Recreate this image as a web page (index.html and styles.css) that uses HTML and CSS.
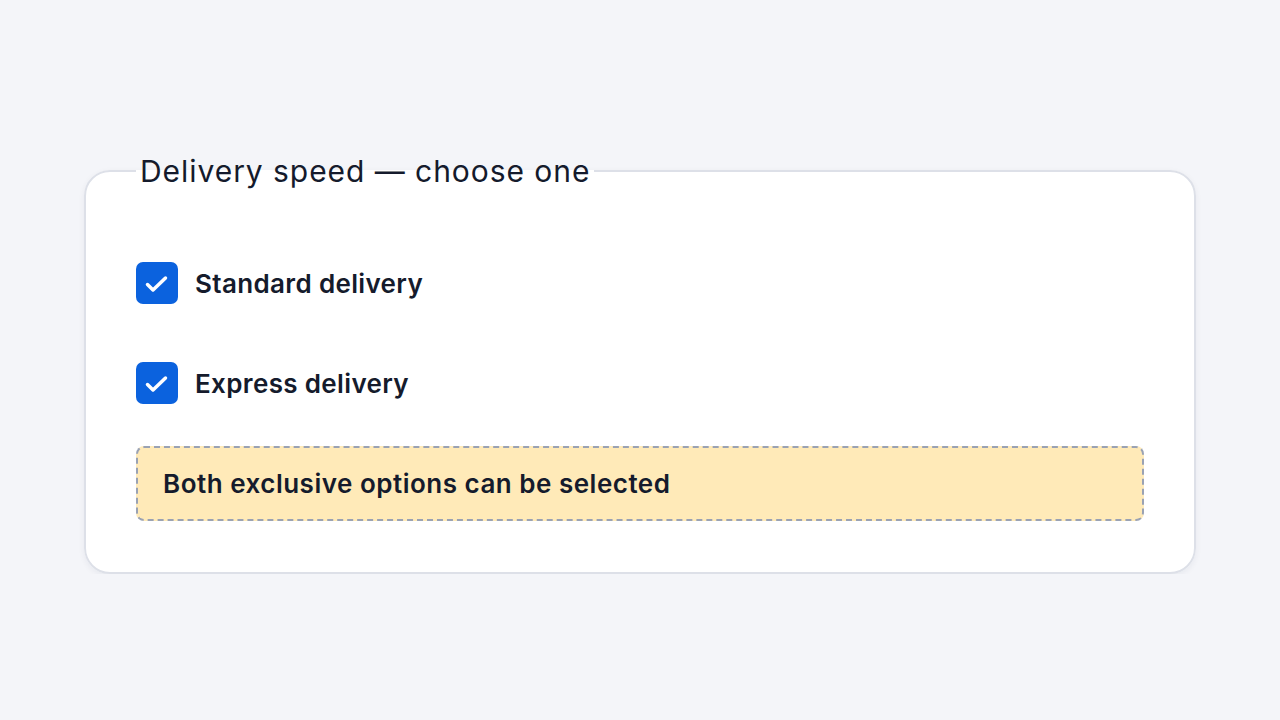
FILE: index.html
```html
<!DOCTYPE html>
<html lang="en">
<head>
  <meta charset="UTF-8">
  <title>Delivery speed</title>
  <link rel="stylesheet" href="styles.css">
</head>
<body>

  <main class="page">
    <fieldset class="group">
      <legend>Delivery speed — choose one</legend>

      <label class="option">
        <span class="box">
          <svg viewBox="0 0 42 42" width="42" height="42"><path d="M11.5 22.5 L17 28 L29.5 16" /></svg>
        </span>
        <span class="label-text">Standard delivery</span>
      </label>

      <label class="option">
        <span class="box">
          <svg viewBox="0 0 42 42" width="42" height="42"><path d="M11.5 22.5 L17 28 L29.5 16" /></svg>
        </span>
        <span class="label-text">Express delivery</span>
      </label>

      <div class="notice">Both exclusive options can be selected</div>
    </fieldset>
  </main>

</body>
</html>
```

FILE: styles.css
```css
body {
  margin: 0;
  background: #f4f5f9;
  font-family: Inter, "Noto Sans", sans-serif;
  color: #151b2c;
}

.page {
  padding: 153px 84px 0;
}

.group {
  margin: 0;
  background: #fff;
  border: 2px solid #dde0e8;
  border-radius: 26px;
  padding: 73px 50px 51px;
  box-shadow: 0 2px 6px rgba(20, 30, 60, 0.06);
}

.group legend {
  padding: 0 4px;
  font-size: 30px;
  line-height: 36px;
  font-weight: 400;
  letter-spacing: 0.95px;
}

.option {
  display: flex;
  align-items: center;
  gap: 17px;
  height: 42px;
  margin-bottom: 58px;
}

.option + .option {
  margin-bottom: 42px;
}

.box {
  width: 42px;
  height: 42px;
  border-radius: 7px;
  background: #0b62de;
  flex: none;
}

.box svg {
  display: block;
  fill: none;
  stroke: #fff;
  stroke-width: 3.5;
  stroke-linecap: round;
  stroke-linejoin: round;
}

.label-text {
  font-size: 26px;
  font-weight: 600;
  letter-spacing: 0.35px;
}

.notice {
  background: #ffeab8;
  border: 2px dashed #9aa2b3;
  border-radius: 8px;
  height: 71px;
  display: flex;
  align-items: center;
  padding: 0 25px;
  font-size: 26px;
  font-weight: 600;
  letter-spacing: 0.5px;
}
```
